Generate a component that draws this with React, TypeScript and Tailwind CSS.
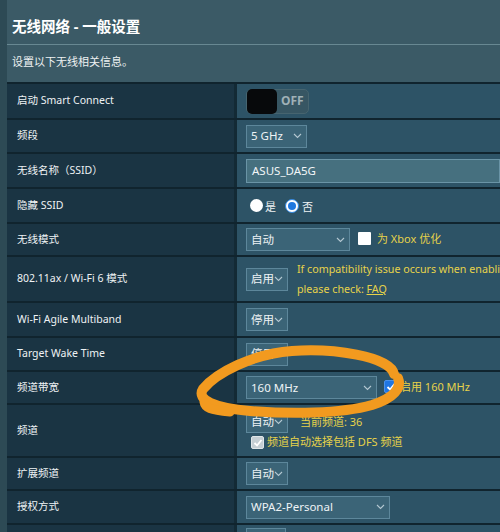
import React from 'react';

const FONT = '"Noto Sans", "Noto Sans CJK SC", sans-serif';

const Chevron = () => (
  <svg width="9" height="6" viewBox="0 0 9 6" className="shrink-0">
    <path d="M1 1 L4.5 4.5 L8 1" fill="none" stroke="#b4c8d2" strokeWidth="1.1" />
  </svg>
);

const Select = ({ value, width }: { value: string; width: string }) => (
  <div
    className={`${width} h-[23px] shrink-0 flex items-center justify-between pl-[4px] pr-[4px] bg-[#3b6477] border border-[#5d879b] text-[11.5px] text-[#eef3f5] whitespace-nowrap`}
  >
    <span>{value}</span>
    <Chevron />
  </div>
);

const Check = ({ bg, border }: { bg: string; border: string }) => (
  <div className={`w-[13px] h-[13px] rounded-[2px] ${bg} ${border} border flex items-center justify-center shrink-0`}>
    <svg width="10" height="10" viewBox="0 0 10 10">
      <path d="M1.5 5 L4 7.5 L8.5 2" fill="none" stroke="white" strokeWidth="1.8" />
    </svg>
  </div>
);

interface RowProps {
  label: string;
  h: string;
  children?: React.ReactNode;
}

const Row = ({ label, h, children }: RowProps) => (
  <div className={`flex ${h} border-b-[2px] border-[#10242e]`}>
    <div className="w-[230px] shrink-0 bg-[#1a3443] flex items-center pl-[10px] text-[10.5px] text-[#eef2f4] border-r-[3px] border-[#132a35] whitespace-nowrap">
      {label}
    </div>
    <div className="flex-1 bg-[#2d5366] flex items-center pl-[9px] min-w-0 overflow-hidden">{children}</div>
  </div>
);

export default function App() {
  return (
    <div
      className="relative w-[500px] h-[532px] overflow-hidden bg-[#3b5a66] border-l-[7px] border-[#2d4a55]"
      style={{ fontFamily: FONT }}
    >
      <div className="pl-[5px] pt-[16px] text-[14.5px] font-bold text-white leading-[20px]">
        无线网络 - 一般设置
      </div>
      <div className="mt-[8px] h-px bg-[#688892]" />
      <div className="pl-[5px] pt-[9px] text-[11px] text-[#eef2f3] leading-[16px]">设置以下无线相关信息。</div>

      <div className="mt-[12px] border-t-[2px] border-[#10242e]">
        <Row label="启动 Smart Connect" h="h-[36px]">
          <div className="flex items-center h-[25px] w-[63px] shrink-0 rounded-[5px] bg-[#375663] border border-[#46646f]">
            <div className="w-[30px] h-[25px] rounded-[5px] bg-[#07090b]" />
            <span className="ml-[4px] text-[12px] font-bold text-[#9fb0b6]">OFF</span>
          </div>
        </Row>
        <Row label="频段" h="h-[34px]">
          <Select value="5 GHz" width="w-[61px]" />
        </Row>
        <Row label="无线名称（SSID）" h="h-[35px]">
          <div className="w-full h-[24px] bg-[#46707f] border border-[#6a94a6] flex items-center pl-[5px] text-[11.5px] text-[#f2f6f8]">
            ASUS_DA5G
          </div>
        </Row>
        <Row label="隐藏 SSID" h="h-[35px]">
          <div className="flex items-center text-[11px] text-[#eef2f4] pl-[4px]">
            <div className="w-[13px] h-[13px] rounded-full bg-white" />
            <span className="ml-[2px] mt-[3px]">是</span>
            <div className="ml-[9px] w-[14px] h-[14px] rounded-full bg-white border-[1.5px] border-[#2f86e0] flex items-center justify-center">
              <div className="w-[8px] h-[8px] rounded-full bg-[#1f78e0]" />
            </div>
            <span className="ml-[3px] mt-[3px]">否</span>
          </div>
        </Row>
        <Row label="无线模式" h="h-[33px]">
          <Select value="自动" width="w-[104px]" />
          <div className="ml-[8px] -mt-[3px] w-[13px] h-[13px] bg-white rounded-[1px] shrink-0" />
          <span className="ml-[6px] text-[11px] text-[#e6d24a] whitespace-nowrap">为 Xbox 优化</span>
        </Row>
        <Row label="802.11ax / Wi-Fi 6 模式" h="h-[46px]">
          <Select value="启用" width="w-[42px]" />
          <div className="ml-[9px] text-[10.7px] leading-[20px] text-[#e6d24a] whitespace-nowrap">
            <div>If compatibility issue occurs when enabling this mode,</div>
            <div>
              please check: <span className="underline">FAQ</span>
            </div>
          </div>
        </Row>
        <Row label="Wi-Fi Agile Multiband" h="h-[35px]">
          <Select value="停用" width="w-[42px]" />
        </Row>
        <Row label="Target Wake Time" h="h-[34px]">
          <Select value="停用" width="w-[42px]" />
        </Row>
        <Row label="频道带宽" h="h-[33px]">
          <Select value="160 MHz" width="w-[131px]" />
          <div className="ml-[7px] -mt-[2px]">
            <Check bg="bg-[#1f76e3]" border="border-[#4a92ea]" />
          </div>
          <span className="ml-[3px] text-[11px] text-[#e6d24a] whitespace-nowrap">启用 160 MHz</span>
        </Row>
        <Row label="频道" h="h-[53px]">
          <div className="flex flex-col">
            <div className="flex items-center">
              <Select value="自动" width="w-[42px]" />
              <span className="ml-[12px] text-[11px] text-[#e6d24a] whitespace-nowrap">当前频道: 36</span>
            </div>
            <div className="flex items-center mt-[1px] pl-[5px]">
              <Check bg="bg-[#c5cfd4]" border="border-[#dfe6e9]" />
              <span className="ml-[3px] text-[11px] text-[#e6d24a] whitespace-nowrap">频道自动选择包括 DFS 频道</span>
            </div>
          </div>
        </Row>
        <Row label="扩展频道" h="h-[33px]">
          <Select value="自动" width="w-[42px]" />
        </Row>
        <Row label="授权方式" h="h-[34px]">
          <Select value="WPA2-Personal" width="w-[144px]" />
        </Row>
        <Row label="" h="h-[30px]">
          <div className="self-start mt-[3px] w-[40px] h-[23px] bg-[#3b6477] border border-[#5d879b]" />
        </Row>
      </div>

      <svg
        className="absolute pointer-events-none"
        style={{ left: -7, top: 0 }}
        width="500"
        height="532"
        viewBox="0 0 500 532"
      >
        <path
          d="M 394 374 C 390 356, 332 348, 292 351 C 252 354, 216 373, 203 389 C 196 400, 215 408, 250 411 C 290 414, 340 414, 372 405 C 394 398, 402 388, 398 378"
          fill="none"
          stroke="#f29a1f"
          strokeWidth="10"
          strokeLinecap="round"
          strokeLinejoin="round"
        />
        <path
          d="M 230 412 C 210 410, 205 408, 204 402"
          fill="none"
          stroke="#f29a1f"
          strokeWidth="9"
          strokeLinecap="round"
        />
      </svg>
    </div>
  );
}
